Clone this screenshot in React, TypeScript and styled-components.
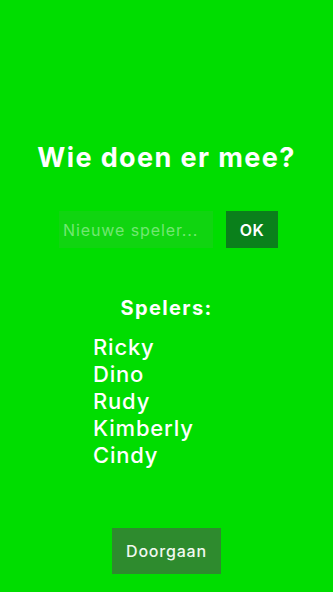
import styled, { createGlobalStyle } from "styled-components";

const players = ["Ricky", "Dino", "Rudy", "Kimberly", "Cindy"];

export default function App() {
    return (
        <>
            <GlobalStyle />
            <Page>
                <Title>Wie doen er mee?</Title>

                <Form>
                    <NameInput type="text" placeholder="Nieuwe speler..." />
                    <OkButton>OK</OkButton>
                </Form>

                <ListTitle>Spelers:</ListTitle>

                <PlayerList>
                    {players.map((player) =>
                        <Player key={player}>{player}</Player>
                    )}
                </PlayerList>

                <NextButton>Doorgaan</NextButton>
            </Page>
        </>
    );
}

const GlobalStyle = createGlobalStyle`
    * {
        box-sizing: border-box;
    }

    body {
        margin: 0;
        background-color: #00dd00;
        font-family: Inter, "Open Sans", sans-serif;
    }
`;

const Page = styled.div`
    width: 100%;
    min-height: 592px;

    display: flex;
    flex-direction: column;
    align-items: center;

    padding-top: 142px;
`;

const Title = styled.div`
    color: #ffffff;
    font-size: 27px;
    font-weight: 700;
    line-height: 32px;
    letter-spacing: 1.4px;
`;

const Form = styled.div`
    display: flex;
    gap: 13px;
    align-items: center;

    margin-top: 37px;
    margin-left: 4px;
`;

const NameInput = styled.input`
    width: 154px;
    height: 37px;

    border: none;
    outline: none;
    padding: 0 4px;

    background-color: #10d510;
    color: #ffffff;
    font-family: inherit;
    font-size: 16px;
    letter-spacing: 0.9px;

    &::placeholder {
        color: #72e872;
    }
`;

const OkButton = styled.button`
    width: 52px;
    height: 37px;

    border: none;
    background-color: #0a801b;
    color: #ffffff;
    font-family: inherit;
    font-size: 16px;
    font-weight: 600;
    letter-spacing: 0.5px;
`;

const ListTitle = styled.div`
    color: #ffffff;
    font-size: 20px;
    font-weight: 700;
    line-height: 24px;
    letter-spacing: 1.4px;

    margin-top: 48px;
`;

const PlayerList = styled.div`
    align-self: stretch;

    display: flex;
    flex-direction: column;

    padding-left: 93px;
    margin-top: 14px;
`;

const Player = styled.div`
    color: #ffffff;
    font-size: 22px;
    font-weight: 500;
    line-height: 27px;
    letter-spacing: 0.8px;
`;

const NextButton = styled.button`
    width: 109px;
    height: 46px;

    border: none;
    background-color: #2e8b2e;
    color: #f0f8f0;
    font-family: inherit;
    font-size: 16px;
    font-weight: 500;
    letter-spacing: 0.8px;

    margin-top: 59px;
`;
